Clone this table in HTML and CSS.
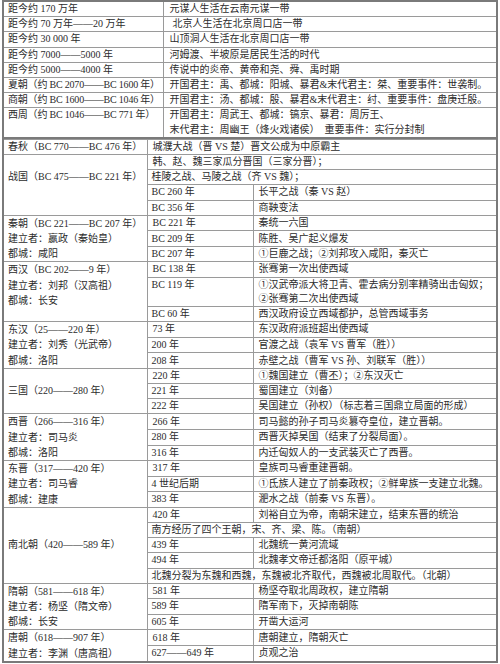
FILE: index.html
```html
<!DOCTYPE html>
<html lang="zh-CN">
<head>
<meta charset="utf-8">
<title>中国古代史年表</title>
<link rel="stylesheet" href="styles.css">
</head>
<body>
<div class="sheet">
<table class="prehistory">
  <colgroup><col class="pa"><col></colgroup>
  <tr><td>距今约 170 万年</td><td>元谋人生活在云南元谋一带</td></tr>
  <tr><td>距今约 70 万年——20 万年</td><td class="indent">北京人生活在北京周口店一带</td></tr>
  <tr><td>距今约 30 000 年</td><td>山顶洞人生活在北京周口店一带</td></tr>
  <tr><td>距今约 7000——5000 年</td><td>河姆渡、半坡原是居民生活的时代</td></tr>
  <tr><td>距今约 5000——4000 年</td><td>传说中的炎帝、黄帝和尧、舜、禹时期</td></tr>
  <tr><td class="tight">夏朝（约 BC 2070——BC 1600 年）</td><td>开国君主：禹、都城：阳城、暴君&amp;末代君主：桀、重要事件：世袭制。</td></tr>
  <tr><td class="tight">商朝（约 BC 1600——BC 1046 年）</td><td>开国君主：汤、都城：殷、暴君&amp;末代君主：纣、重要事件：盘庚迁殷。</td></tr>
  <tr><td class="top tight">西周（约 BC 1046——BC 771 年）</td><td>开国君主：周武王、都城：镐京、暴君：周厉王、<br>末代君主：周幽王（烽火戏诸侯）　重要事件：实行分封制</td></tr>
</table>
<table class="dynasties">
  <colgroup><col class="da"><col class="db"><col></colgroup>
  <tr><td>春秋（BC 770——BC 476 年）</td><td colspan="2">城濮大战（晋 VS 楚）晋文公成为中原霸主</td></tr>
  <tr><td rowspan="4" class="top second">战国（BC 475——BC 221 年）</td><td colspan="2">韩、赵、魏三家瓜分晋国（三家分晋）；</td></tr>
  <tr><td colspan="2">桂陵之战、马陵之战（齐 VS 魏）；</td></tr>
  <tr><td>BC 260 年</td><td>长平之战（秦 VS 赵）</td></tr>
  <tr><td>BC 356 年</td><td>商鞅变法</td></tr>

  <tr><td rowspan="3" class="stack">秦朝（BC 221——BC 207 年）<br>建立者：嬴政（秦始皇）<br>都城：咸阳</td><td>BC 221 年</td><td>秦统一六国</td></tr>
  <tr><td>BC 209 年</td><td>陈胜、吴广起义爆发</td></tr>
  <tr><td>BC 207 年</td><td>①巨鹿之战；②刘邦攻入咸阳，秦灭亡</td></tr>

  <tr><td rowspan="3" class="stack">西汉（BC 202——9 年）<br>建立者：刘邦（汉高祖）<br>都城：长安</td><td>BC 138 年</td><td>张骞第一次出使西域</td></tr>
  <tr><td class="top">BC 119 年</td><td>①汉武帝派大将卫青、霍去病分别率精骑出击匈奴；<br>②张骞第二次出使西域</td></tr>
  <tr><td>BC 60 年</td><td>西汉政府设立西域都护，总管西域事务</td></tr>

  <tr><td rowspan="3" class="stack">东汉（25——220 年）<br>建立者：刘秀（光武帝）<br>都城：洛阳</td><td>73 年</td><td>东汉政府派班超出使西域</td></tr>
  <tr><td>200 年</td><td>官渡之战（袁军 VS 曹军（胜））</td></tr>
  <tr><td>208 年</td><td>赤壁之战（曹军 VS 孙、刘联军（胜））</td></tr>

  <tr><td rowspan="3">三国（220——280 年）</td><td>220 年</td><td>①魏国建立（曹丕）；②东汉灭亡</td></tr>
  <tr><td>221 年</td><td>蜀国建立（刘备）</td></tr>
  <tr><td>222 年</td><td>吴国建立（孙权）（标志着三国鼎立局面的形成）</td></tr>

  <tr><td rowspan="3" class="stack">西晋（266——316 年）<br>建立者：司马炎<br>都城：洛阳</td><td>266 年</td><td>司马懿的孙子司马炎篡夺皇位，建立晋朝。</td></tr>
  <tr><td>280 年</td><td>西晋灭掉吴国（结束了分裂局面）。</td></tr>
  <tr><td>316 年</td><td>内迁匈奴人的一支武装灭亡了西晋。</td></tr>

  <tr><td rowspan="3" class="stack">东晋（317——420 年）<br>建立者：司马睿<br>都城：建康</td><td>317 年</td><td>皇族司马睿重建晋朝。</td></tr>
  <tr><td>4 世纪后期</td><td>①氐族人建立了前秦政权；②鲜卑族一支建立北魏。</td></tr>
  <tr><td>383 年</td><td>淝水之战（前秦 VS 东晋）。</td></tr>

  <tr><td rowspan="5">南北朝（420——589 年）</td><td>420 年</td><td>刘裕自立为帝，南朝宋建立，结束东晋的统治</td></tr>
  <tr><td colspan="2">南方经历了四个王朝，宋、齐、梁、陈。（南朝）</td></tr>
  <tr><td>439 年</td><td>北魏统一黄河流域</td></tr>
  <tr><td>494 年</td><td>北魏孝文帝迁都洛阳（原平城）</td></tr>
  <tr><td colspan="2">北魏分裂为东魏和西魏，东魏被北齐取代，西魏被北周取代。（北朝）</td></tr>

  <tr><td rowspan="3" class="stack">隋朝（581——618 年）<br>建立者：杨坚（隋文帝）<br>都城：长安</td><td>581 年</td><td>杨坚夺取北周政权，建立隋朝</td></tr>
  <tr><td>589 年</td><td>隋军南下，灭掉南朝陈</td></tr>
  <tr><td>605 年</td><td>开凿大运河</td></tr>

  <tr><td rowspan="2" class="stack">唐朝（618——907 年）<br>建立者：李渊（唐高祖）</td><td>618 年</td><td>唐朝建立，隋朝灭亡</td></tr>
  <tr><td>627——649 年</td><td>贞观之治</td></tr>
</table>
</div>
</body>
</html>
```

FILE: styles.css
```css
html, body {
  margin: 0;
  padding: 0;
  background: #ffffff;
}

body {
  font-family: "Liberation Serif", "Noto Sans CJK SC", serif;
  font-size: 10px;
  color: #2b2b2b;
}

.sheet {
  padding: 0 2px;
}

table {
  border-collapse: collapse;
  table-layout: fixed;
  width: 496px;
}

td {
  border: 1px solid #9a9a9a;
  padding: 0 1px 0 4px;
  line-height: 14.2px;
  white-space: nowrap;
  vertical-align: middle;
}

.prehistory {
  border: 2px solid #7a7a7a;
}

.prehistory .pa {
  width: 160px;
}

.prehistory td + td {
  padding-left: 6px;
}

.dynasties {
  border: 2px solid #7a7a7a;
  border-top: 1px solid #7a7a7a;
}

.dynasties .da {
  width: 144px;
}

.dynasties .db {
  width: 106px;
}

.dynasties td + td {
  padding-left: 5px;
}

.prehistory td.indent {
  padding-left: 9px;
}

.tight {
  letter-spacing: -0.2px;
}

.top {
  vertical-align: top;
}

.second {
  padding-top: 15px;
}

.stack {
  vertical-align: top;
  line-height: 15.2px;
}
```
